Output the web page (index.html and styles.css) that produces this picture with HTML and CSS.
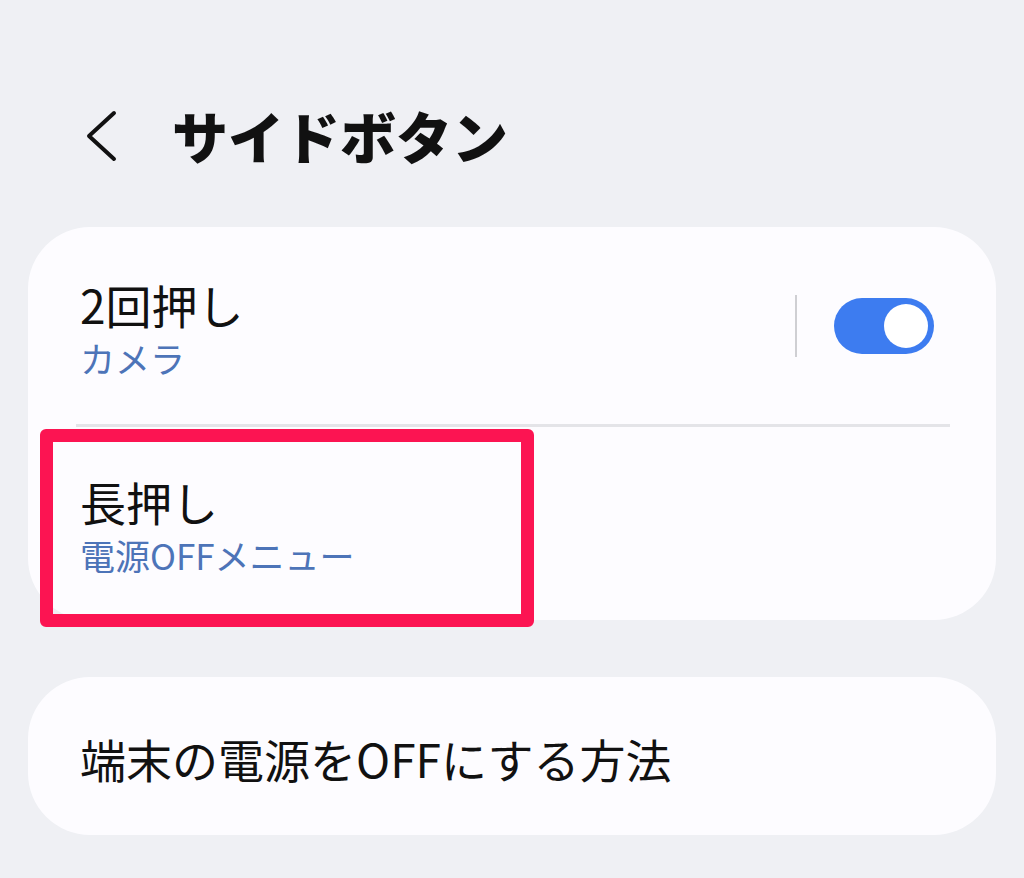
FILE: index.html
```html
<!DOCTYPE html>
<html lang="ja">
<head>
<meta charset="utf-8">
<link rel="stylesheet" href="styles.css">
</head>
<body>
<div class="page">
  <header class="header">
    <svg class="back" viewBox="0 0 34 52" width="34" height="52" aria-hidden="true">
      <polyline points="30,3 5,26 30,49" fill="none" stroke="#111" stroke-width="4" stroke-linecap="round" stroke-linejoin="round"/>
    </svg>
    <h1 class="title">サイドボタン</h1>
  </header>

  <section class="card card-main">
    <div class="row row-first">
      <div class="texts">
        <div class="label">2回押し</div>
        <div class="sub">カメラ</div>
      </div>
      <div class="controls">
        <span class="vdiv"></span>
        <span class="toggle"><span class="knob"></span></span>
      </div>
    </div>
    <div class="sep"></div>
    <div class="row row-second">
      <div class="texts">
        <div class="label">長押し</div>
        <div class="sub">電源OFFメニュー</div>
      </div>
      <div class="highlight"></div>
    </div>
  </section>

  <section class="card card-link">
    <div class="label">端末の電源をOFFにする方法</div>
  </section>
</div>
</body>
</html>
```

FILE: styles.css
```css
html, body {
  margin: 0;
  padding: 0;
}
body {
  background: #eff0f4;
  font-family: "Noto Sans CJK JP", "Noto Sans", sans-serif;
  color: #111;
  width: 1024px;
  height: 878px;
  overflow: hidden;
}
.page {
  padding: 0 28px;
  display: flex;
  flex-direction: column;
}
.header {
  height: 227px;
  display: flex;
  align-items: center;
  padding: 56px 0 0 56px;
  box-sizing: border-box;
}
.back {
  display: block;
  margin-top: -12px;
}
.title {
  margin: -14px 0 0 54px;
  font-size: 56px;
  font-weight: 900;
  letter-spacing: 0;
  line-height: 1;
}
.card {
  background: #fdfcff;
  border-radius: 62px;
}
.card-main {
  height: 393px;
  display: flex;
  flex-direction: column;
}
.row {
  position: relative;
  display: flex;
  align-items: center;
  padding: 0 62px 0 52px;
}
.row-first {
  height: 197px;
}
.row-second {
  flex: 1;
}
.texts {
  flex: 1;
  display: flex;
  flex-direction: column;
}
.label {
  font-size: 46px;
  line-height: 56px;
  color: #111;
}
.sub {
  font-size: 35px;
  line-height: 44px;
  color: #4d74b8;
  margin-top: 4px;
}
.row-first .texts {
  margin-top: 4px;
}
.row-second .texts {
  margin-top: 2px;
}
.controls {
  display: flex;
  align-items: center;
  margin-top: 0;
}
.vdiv {
  width: 2px;
  height: 62px;
  background: #cfcfd3;
  margin-right: 37px;
}
.toggle {
  position: relative;
  width: 100px;
  height: 56px;
  border-radius: 28px;
  background: #3d7cf0;
}
.knob {
  position: absolute;
  top: 6px;
  right: 6px;
  width: 44px;
  height: 44px;
  border-radius: 50%;
  background: #ffffff;
}
.sep {
  height: 3px;
  background: #e4e4e8;
  margin: 0 46px 0 48px;
}
.highlight {
  position: absolute;
  left: 12px;
  top: 2px;
  width: 494px;
  height: 198px;
  box-sizing: border-box;
  border: 13px solid #fc1452;
  border-radius: 6px;
}
.card-link {
  margin-top: 57px;
  height: 158px;
  display: flex;
  align-items: center;
  padding-left: 52px;
}
.card-link .label {
  font-size: 46px;
  margin-top: 4px;
}
```
